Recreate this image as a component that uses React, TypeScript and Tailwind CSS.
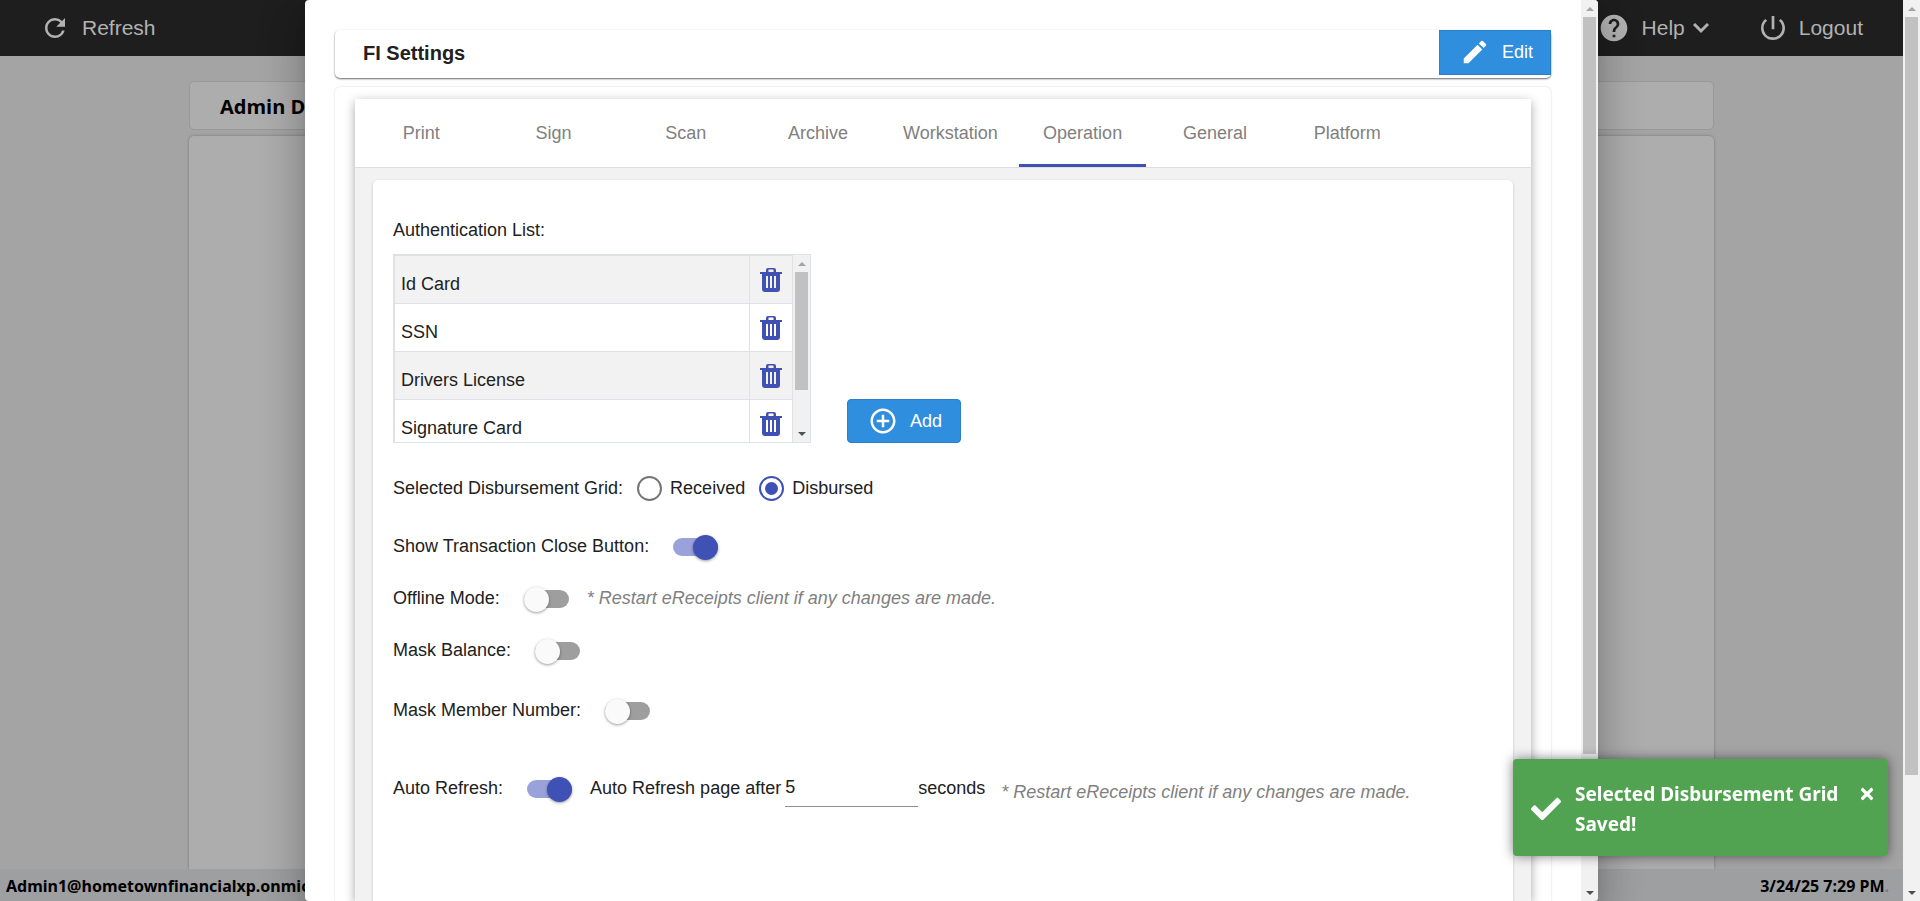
import { useState } from 'react';
import type { ReactNode } from 'react';
import { MdAddCircleOutline, MdEdit, MdHelp, MdRefresh, MdPowerSettingsNew } from 'react-icons/md';
import { FaCheck, FaTimes } from 'react-icons/fa';

const TABS = ['Print', 'Sign', 'Scan', 'Archive', 'Workstation', 'Operation', 'General', 'Platform'];
const AUTH_LIST = ['Id Card', 'SSN', 'Drivers License', 'Signature Card'];
const RESTART_NOTE = '* Restart eReceipts client if any changes are made.';

function TrashIcon() {
  return (
    <svg viewBox="0 0 22 24" className="h-6 w-[22px]" fill="#3f51b5" aria-hidden="true">
      <path fillRule="evenodd" d="M8 0h6q2 0 2 2v2H6V2q0-2 2-2zM8.500 1.500V4h5V1.500z" />
      <path d="M0 4h22v2H0z" />
      <path
        fillRule="evenodd"
        d="M2 6h18v15q0 3-3 3H5q-3 0-3-3zM6 8v12h2V8zM10 8v12h2V8zM14 8v12h2V8z"
      />
    </svg>
  );
}

function ChevronIcon() {
  return (
    <svg viewBox="0 0 16 11" className="h-[11px] w-4" fill="none" stroke="currentColor" strokeWidth="3" aria-hidden="true">
      <path d="M1 1l7 7 7-7" />
    </svg>
  );
}

// Static track drawn next to a scrolling pane
function ScrollTrack({ thumb }: { thumb: string }) {
  return (
    <div className="flex w-[17px] shrink-0 flex-col items-center bg-[#f1f1f1]" aria-hidden="true">
      <div className="flex h-[17px] shrink-0 items-center">
        <div className="border-x-4 border-b-4 border-x-transparent border-b-[#a3a3a3]" />
      </div>
      <div className="w-full grow px-0.5">
        <div className={`bg-[#c1c1c1] ${thumb}`} />
      </div>
      <div className="flex h-[17px] shrink-0 items-center">
        <div className="border-x-4 border-t-4 border-x-transparent border-t-[#505050]" />
      </div>
    </div>
  );
}

interface ToggleProps {
  label: string;
  defaultChecked?: boolean;
  children?: ReactNode;
}

function ToggleRow({ label, defaultChecked = false, children }: ToggleProps) {
  return (
    <div className="flex h-[26px] items-center">
      <label className="flex items-center gap-6">
        <span className="pb-0.5">{label}</span>
        <input type="checkbox" role="switch" defaultChecked={defaultChecked} className="peer sr-only" />
        <span className="flex h-[18px] w-[45px] items-center rounded-full bg-[#9e9e9e] peer-checked:hidden">
          <span className="size-[25px] rounded-full bg-[#fafafa] shadow-[0_1px_3px_rgba(0,0,0,0.4)]" />
        </span>
        <span className="hidden h-[18px] w-[45px] items-center justify-end rounded-full bg-[#9aa2dc] peer-checked:flex">
          <span className="size-[25px] rounded-full bg-[#3f51b5] shadow-[0_1px_3px_rgba(0,0,0,0.4)]" />
        </span>
      </label>
      {children}
    </div>
  );
}

function RadioOption({ label, defaultChecked = false }: { label: string; defaultChecked?: boolean }) {
  return (
    <label className="flex items-center gap-2">
      <input
        type="radio"
        name="disbursement-grid"
        defaultChecked={defaultChecked}
        className="size-[25px] appearance-none rounded-full border-2 border-[#757575] p-1 checked:border-[#3f51b5] checked:bg-[#3f51b5] checked:bg-clip-content"
      />
      {label}
    </label>
  );
}

function Backdrop() {
  return (
    <div className="flex h-full flex-col bg-[#a4a4a4]">
      <header className="flex h-14 shrink-0 items-center justify-between bg-[#1e1e1e] pr-10 pl-10 text-[21px] text-[#b2b2b2]">
        <button type="button" className="flex items-center gap-3">
          <MdRefresh className="size-[30px]" />
          Refresh
        </button>
        <div className="flex items-center gap-12">
          <button type="button" className="flex items-center">
            <MdHelp className="mr-3 size-8" />
            <span className="mr-2">Help</span>
            <ChevronIcon />
          </button>
          <button type="button" className="flex items-center gap-2.5">
            <MdPowerSettingsNew className="size-8" />
            Logout
          </button>
        </div>
      </header>
      <main className="mx-[189px] flex grow flex-col gap-1.5 pt-[25px]">
        <div className="flex h-[49px] items-center rounded-[5px] border border-[#989898] bg-[#adadad] pt-0.5 pl-[30px] font-['Open_Sans','Noto_Sans',sans-serif] text-xl font-bold text-black">
          Admin Dashboard
        </div>
        <div className="grow rounded-t-[5px] bg-[#adadad] shadow-[0_0_3px_rgba(0,0,0,0.3)]" />
      </main>
      <footer className="flex h-8 shrink-0 items-center justify-between bg-[#9d9fa1] pt-0.5 pr-3.5 pl-1.5 font-['Noto_Sans','Open_Sans',sans-serif] text-base font-bold text-black">
        <span>Admin1@hometownfinancialxp.onmicrosoft.com</span>
        <span>
          3/24/25 7:29 PM<span className="text-[#7c7e80]">.</span>
        </span>
      </footer>
    </div>
  );
}

function AuthenticationList() {
  return (
    <div className="flex items-end gap-9">
      <div className="flex h-[189px] w-[418px] overflow-hidden border border-[#dee2e6]">
        <div className="grow overflow-hidden">
          <table className="w-full border-collapse" aria-label="Authentication List">
            <tbody>
              {AUTH_LIST.map(item => (
                <tr key={item} className="h-12 border border-[#dee2e6] odd:bg-[#f2f2f2]">
                  <td className="border border-[#dee2e6] px-1.5 pt-2">{item}</td>
                  <td className="w-[43px] border border-[#dee2e6] pl-2.5">
                    <button type="button" aria-label={`Delete ${item}`} className="block">
                      <TrashIcon />
                    </button>
                  </td>
                </tr>
              ))}
            </tbody>
          </table>
        </div>
        <ScrollTrack thumb="h-[118px]" />
      </div>
      <button
        type="button"
        className="flex h-11 w-[114px] items-center gap-3 rounded border border-[#2a7fc8] bg-[#308ede] pl-5 text-white"
      >
        <MdAddCircleOutline className="size-[30px]" />
        Add
      </button>
    </div>
  );
}

function OperationPanel() {
  return (
    <div className="grow rounded-t-[5px] bg-white px-5 pt-[38px] shadow-[0_1px_3px_rgba(0,0,0,0.2)]">
      <div className="mb-3 leading-6">Authentication List:</div>
      <AuthenticationList />
      <fieldset className="mt-8 flex h-[26px] items-center gap-3.5">
        <legend className="float-left">Selected Disbursement Grid:</legend>
        <RadioOption label="Received" />
        <RadioOption label="Disbursed" defaultChecked />
      </fieldset>
      <div className="mt-[33px]">
        <ToggleRow label="Show Transaction Close Button:" defaultChecked />
      </div>
      <div className="mt-[26px]">
        <ToggleRow label="Offline Mode:">
          <span className="ml-[18px] pb-0.5 text-[#808080] italic">{RESTART_NOTE}</span>
        </ToggleRow>
      </div>
      <div className="mt-[26px]">
        <ToggleRow label="Mask Balance:" />
      </div>
      <div className="mt-[34px]">
        <ToggleRow label="Mask Member Number:" />
      </div>
      <div className="mt-[52px]">
        <ToggleRow label="Auto Refresh:" defaultChecked>
          <label htmlFor="refresh-seconds" className="mr-1 ml-[18px] pb-0.5">
            Auto Refresh page after
          </label>
          <input
            id="refresh-seconds"
            type="text"
            defaultValue="5"
            className="h-9 w-[133px] border-b border-[#8f8f8f] pb-0.5 outline-none"
          />
          <span className="pb-0.5">seconds</span>
          <span className="mt-1.5 ml-4 text-[#808080] italic">{RESTART_NOTE}</span>
        </ToggleRow>
      </div>
    </div>
  );
}

function SettingsDialog() {
  const [active, setActive] = useState('Operation');

  return (
    <div
      role="dialog"
      aria-label="FI Settings"
      className="flex h-full w-[68%] max-w-[1293px] overflow-hidden rounded bg-white text-lg text-[#212121] shadow-[0_11px_15px_-7px_rgba(0,0,0,0.2),0_24px_38px_3px_rgba(0,0,0,0.14),0_9px_46px_8px_rgba(0,0,0,0.12)]"
    >
      <div className="flex grow flex-col px-[30px] pt-[30px]">
        <div className="mb-[9px] flex h-12 shrink-0 items-start justify-between rounded-[5px] pl-7 shadow-[0_1px_2px_rgba(0,0,0,0.6)]">
          <h1 className="text-xl leading-[46px] font-bold">FI Settings</h1>
          <button
            type="button"
            className="flex h-[45px] w-28 items-center gap-3 border border-[#2a7fc8] bg-[#308ede] pb-0.5 pl-5 text-white"
          >
            <MdEdit className="size-[30px]" />
            Edit
          </button>
        </div>
        <div className="flex grow flex-col rounded-t-[5px] px-5 pt-3 shadow-[0_0_2px_rgba(0,0,0,0.2)]">
          <div className="flex grow flex-col bg-[#f2f2f2] shadow-[0_3px_10px_rgba(0,0,0,0.35)]">
            <div className="border-b border-[#dedede] bg-white">
              <div role="tablist" className="flex h-[68px] w-9/10">
                {TABS.map(tab => (
                  <button
                    key={tab}
                    type="button"
                    role="tab"
                    aria-selected={tab === active}
                    onClick={() => setActive(tab)}
                    className="mx-[3px] flex-1 basis-0 border-t-3 border-b-3 border-transparent text-[#808080] aria-selected:border-b-[#3f51b5]"
                  >
                    {tab}
                  </button>
                ))}
              </div>
            </div>
            <div className="flex grow flex-col px-[18px] pt-3">
              <OperationPanel />
            </div>
          </div>
        </div>
      </div>
      <ScrollTrack thumb="h-[737px]" />
    </div>
  );
}

function Toast() {
  return (
    <div
      role="status"
      className="fixed right-8 bottom-[45px] flex w-[375px] items-start rounded bg-[#51a351] pt-5 pr-3 pb-[17px] pl-[18px] font-['Noto_Sans','Open_Sans',sans-serif] text-[19px] leading-[30px] font-bold text-white shadow-[0_0_12px_rgba(0,0,0,0.5)]"
    >
      <FaCheck className="mr-3.5 size-[30px] shrink-0 self-center" />
      <p className="grow">Selected Disbursement Grid Saved!</p>
      <button type="button" aria-label="Close" className="flex h-[30px] shrink-0 items-center">
        <FaTimes className="size-[18px]" />
      </button>
    </div>
  );
}

export default function App() {
  return (
    <div className="flex h-screen overflow-hidden font-['Liberation_Sans',Arial,sans-serif]">
      <div className="relative grow">
        <Backdrop />
        <div className="absolute inset-0 flex justify-center">
          <SettingsDialog />
        </div>
      </div>
      <ScrollTrack thumb="h-[758px]" />
      <Toast />
    </div>
  );
}
